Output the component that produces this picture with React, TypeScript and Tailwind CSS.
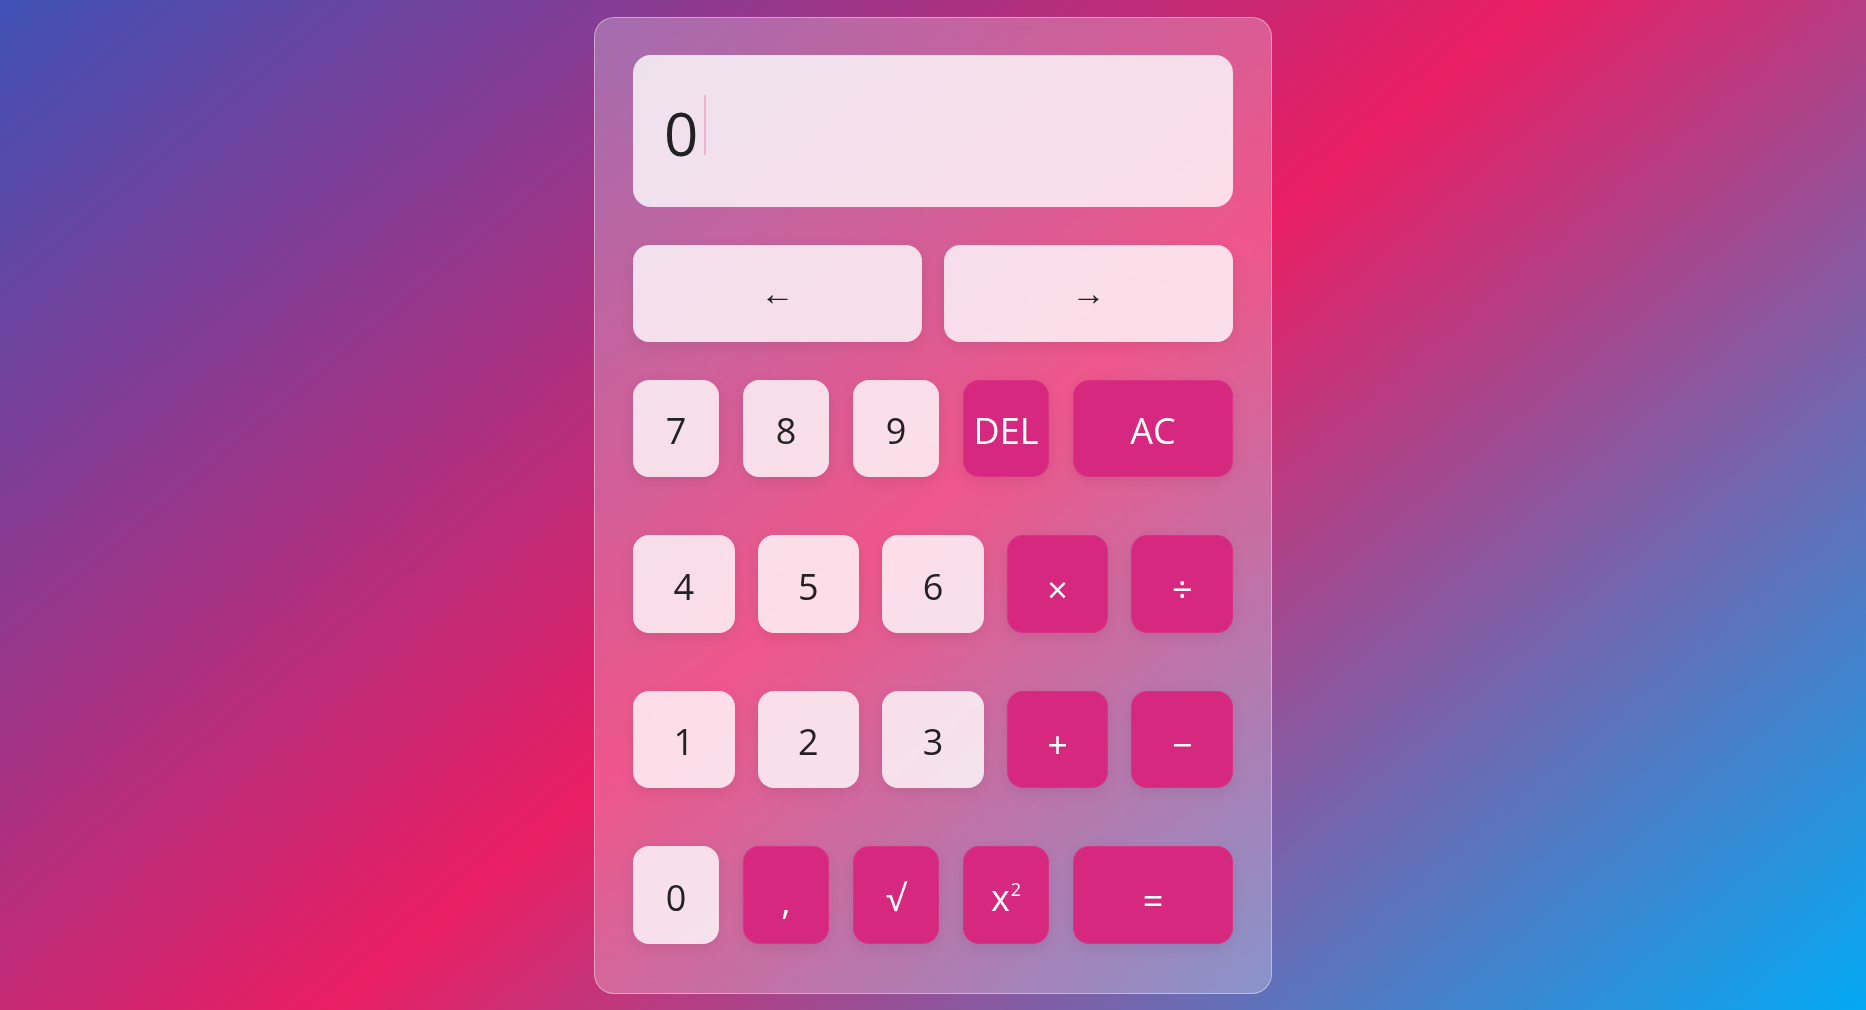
import React from "react";

type Key = { label: React.ReactNode; kind: "num" | "op"; sym?: boolean };

const light =
    "flex items-center justify-center rounded-2xl bg-white/80 text-[#222] shadow-[0_4px_14px_rgba(0,0,0,0.08)]";
const dark =
    "flex items-center justify-center rounded-2xl bg-[#d6287f] text-white border border-white/5 shadow-[0_4px_14px_rgba(0,0,0,0.08)]";

function Pad({ k }: { k: Key }) {
    return (
        <button className={k.kind === "num" ? light : dark}>
            <span className={k.sym ? "translate-y-[6px]" : "translate-y-[3px]"}>{k.label}</span>
        </button>
    );
}

export default function App() {
    const rowA: Key[] = [
        { label: "7", kind: "num" },
        { label: "8", kind: "num" },
        { label: "9", kind: "num" },
        { label: "DEL", kind: "op" },
        { label: "AC", kind: "op" },
    ];
    const rowB: Key[] = [
        { label: "4", kind: "num" },
        { label: "5", kind: "num" },
        { label: "6", kind: "num" },
        { label: "×", kind: "op", sym: true },
        { label: "÷", kind: "op", sym: true },
    ];
    const rowC: Key[] = [
        { label: "1", kind: "num" },
        { label: "2", kind: "num" },
        { label: "3", kind: "num" },
        { label: "+", kind: "op", sym: true },
        { label: "−", kind: "op", sym: true },
    ];
    const rowD: Key[] = [
        { label: "0", kind: "num" },
        { label: ",", kind: "op", sym: true },
        { label: "√", kind: "op" },
        {
            label: (
                <span>
                    x<sup className="text-[18px] -top-[15px] ml-[1px]">2</sup>
                </span>
            ),
            kind: "op",
        },
        { label: "=", kind: "op", sym: true },
    ];

    return (
        <main className="min-h-screen flex items-center justify-center bg-[linear-gradient(140deg,#3f51b5,#e91e63_50%,#03a9f4)] font-['Open_Sans',sans-serif]">
            {/* Calculator card */}
            <div className="w-[678px] rounded-[20px] border border-white/40 bg-white/25 backdrop-blur-md px-[38px] pt-[37px] pb-[49px] flex flex-col">
                {/* Display */}
                <div className="h-[152px] rounded-[18px] bg-white/80 flex items-center px-[31px] text-[60px] leading-none text-[#222]">
                    <span className="translate-y-[2px]">0</span>
                    <span className="ml-[6px] mt-[-11px] w-[2px] h-[60px] bg-[#ebb5d2]"></span>
                </div>

                {/* Cursor arrows */}
                <div className="mt-[38px] grid grid-cols-2 gap-[22px] h-[97px] text-[34px]">
                    <button className={light}>
                        <span className="-translate-y-[1px]">←</span>
                    </button>
                    <button className={light}>
                        <span className="-translate-y-[1px]">→</span>
                    </button>
                </div>

                {/* Keypad */}
                <div className="mt-[38px] flex flex-col gap-[58px] text-[36px]">
                    <div className="grid grid-cols-[86px_86px_86px_86px_1fr] gap-x-6 h-[97px]">
                        {rowA.map((k, i) => (
                            <Pad key={i} k={k} />
                        ))}
                    </div>
                    <div className="grid grid-cols-5 gap-x-[23px] h-[98px]">
                        {rowB.map((k, i) => (
                            <Pad key={i} k={k} />
                        ))}
                    </div>
                    <div className="grid grid-cols-5 gap-x-[23px] h-[97px]">
                        {rowC.map((k, i) => (
                            <Pad key={i} k={k} />
                        ))}
                    </div>
                    <div className="grid grid-cols-[86px_86px_86px_86px_1fr] gap-x-6 h-[98px]">
                        {rowD.map((k, i) => (
                            <Pad key={i} k={k} />
                        ))}
                    </div>
                </div>
            </div>
        </main>
    );
}
